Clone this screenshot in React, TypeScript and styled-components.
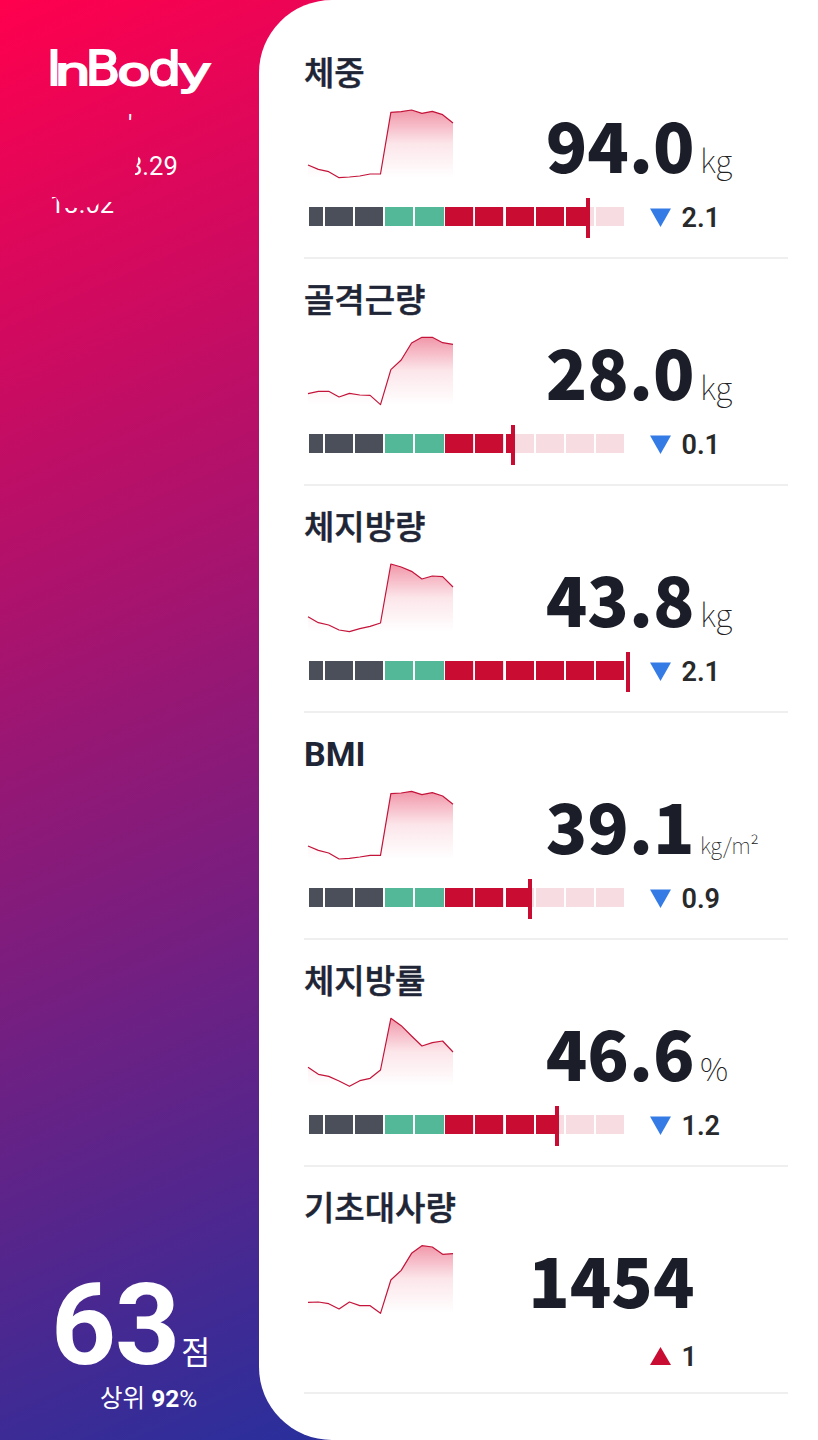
import React from "react";
import styled, { createGlobalStyle } from "styled-components";

const GlobalStyle = createGlobalStyle`
  * { box-sizing: border-box; }
  body { margin: 0; }
`;

const KR = `"Noto Sans CJK KR", sans-serif`;
const LATIN = `Roboto, "Noto Sans CJK KR", sans-serif`;

const Screen = styled.main`
  display: flex;
  width: 818px;
  height: 1440px;
  overflow: hidden;
  background: linear-gradient(156deg, #ff004e 0%, #2a2f9c 99%) 0 0 / 340px 100% no-repeat;
`;

const Sidebar = styled.aside`
  display: flex;
  flex-direction: column;
  justify-content: space-between;
  width: 259px;
  padding: 40px 0 24px 50px;
  color: #fff;
`;

const Logo = styled.svg`
  display: block;
  width: 164px;
  height: 60px;
  overflow: visible;
  font-family: "DejaVu Sans", sans-serif;
`;

const Stamp = styled.div`
  display: flex;
  flex-direction: column;
  font: 400 25.5px/38px ${LATIN};
`;

const StampLine = styled.span<{ $indent?: number; $drop?: number; $clip: string; $height?: number }>`
  height: ${(p) => p.$height ?? 38}px;
  padding: ${(p) => p.$drop ?? 0}px 0 0 ${(p) => p.$indent ?? 0}px;
  clip-path: ${(p) => p.$clip};
`;

const Score = styled.div`
  display: flex;
  align-items: baseline;
  padding-left: 1px;
  font: 700 113.5px/110px ${LATIN};
  letter-spacing: -1px;
`;

const ScoreUnit = styled.span`
  margin-left: 2px;
  font: 400 31.5px/40px ${KR};
`;

const Rank = styled.div`
  padding-left: 50px;
  font: 400 24.5px/35px ${LATIN};
  white-space: nowrap;
`;

const Panel = styled.div`
  flex: 1;
  padding: 32px 0 0 45px;
  background: #fff;
  border-radius: 73px 0 0 73px;
`;

const Metric = styled.section`
  display: flex;
  flex-direction: column;
  width: 484px;
  height: 227px;
  border-bottom: 2px solid #efeff0;
`;

const Title = styled.h2`
  height: 77px;
  margin: 0;
  padding-top: 19px;
  font: 500 33px/40px ${KR};
  color: #202536;
  -webkit-text-stroke: 0.5px #202536;

  &:lang(en) {
    padding-top: 21px;
    font: 700 34px/41px ${LATIN};
    -webkit-text-stroke: 0;
  }
`;

const Reading = styled.div`
  display: flex;
  height: 89px;
  padding-left: 4px;
`;

const Spark = styled.svg`
  flex: none;
  width: 145px;
  height: 69px;
  overflow: visible;
`;

const Amount = styled.div`
  display: flex;
  align-items: baseline;
  height: 78px;
`;

const Value = styled.div`
  width: 241.5px;
  text-align: right;
  font: 900 68.3px/69px ${KR};
  color: #1b1e28;
`;

const Unit = styled.div<{ $small?: boolean }>`
  padding-left: 5.5px;
  font: 100 ${(p) => (p.$small ? 22 : 32)}px/40px ${KR};
  letter-spacing: ${(p) => (p.$small ? -0.5 : -0.3)}px;
  color: #222;
`;

const Foot = styled.div<{ $tall?: boolean }>`
  display: flex;
  align-items: center;
  height: ${(p) => (p.$tall ? 48 : 40)}px;
  padding-left: 5px;
`;

const Gauge = styled.div`
  position: relative;
  display: flex;
  align-items: center;
  gap: 1.8px;
  width: 341px;
  height: 40px;
`;

const Segment = styled.div<{ $tone: string; $first?: boolean }>`
  width: ${(p) => (p.$first ? 14.2 : 28.3)}px;
  height: 19px;
  margin-top: -3px;
  background: ${(p) => p.$tone};
`;

const Marker = styled.i`
  position: absolute;
  top: 0;
  width: 4px;
  height: 40px;
  background: #c90c32;
`;

const Delta = styled.div`
  display: flex;
  align-items: center;
  gap: 10.5px;
  font: 600 27px/40px ${LATIN};
  color: #28292b;
`;

const Arrow = styled.svg`
  width: 21px;
  height: 19px;
  margin-top: -2px;
`;

type MetricData = {
  title: string;
  lang?: string;
  value: string;
  unit?: string;
  small?: boolean;
  delta: string;
  up?: boolean;
  marker?: number;
  points: number[];
};

const metrics: MetricData[] = [
  { title: "체중", value: "94.0", unit: "kg", delta: "2.1", marker: 277, points: [168, 181, 188, 206, 204, 201, 195, 195, 10, 8, 3, 13, 7, 17, 42] },
  { title: "골격근량", value: "28.0", unit: "kg", delta: "0.1", marker: 202.3, points: [173, 166, 166, 183, 172, 177, 178, 206, 101, 72, 21, 4, 4, 20, 25] },
  { title: "체지방량", value: "43.8", unit: "kg", delta: "2.1", marker: 317.2, points: [161, 179, 186, 201, 206, 197, 190, 180, 3, 12, 25, 48, 39, 41, 72] },
  { title: "BMI", lang: "en", value: "39.1", unit: "kg/m²", small: true, delta: "0.9", marker: 219, points: [168, 181, 189, 207, 205, 201, 196, 196, 11, 9, 4, 14, 8, 18, 43] },
  { title: "체지방률", value: "46.6", unit: "%", delta: "1.2", marker: 246, points: [151, 172, 178, 192, 208, 191, 184, 159, 4, 26, 57, 87, 77, 72, 105] },
  { title: "기초대사량", value: "1454", delta: "1", up: true, points: [175, 174, 179, 195, 174, 185, 185, 208, 108, 79, 28, 5, 9, 31, 29] },
];

const STEP = 435 / 14;

function Sparkline({ points, id }: { points: number[]; id: string }) {
  const line = points.map((y, i) => `${(i * STEP).toFixed(1)},${y}`).join(" L");
  return (
    <Spark viewBox="0 0 435 207">
      <defs>
        <linearGradient id={id} gradientUnits="userSpaceOnUse" x1="0" y1="0" x2="0" y2="207">
          <stop offset="0" stopColor="#e0173f" stopOpacity="0.46" />
          <stop offset="0.5" stopColor="#e0173f" stopOpacity="0.11" />
          <stop offset="1" stopColor="#e0173f" stopOpacity="0" />
        </linearGradient>
      </defs>
      <path d={`M${line} L435,207 L0,207 Z`} fill={`url(#${id})`} />
      <path d={`M${line}`} fill="none" stroke="#c4143a" strokeWidth="3.6" strokeLinejoin="round" />
    </Spark>
  );
}

function segmentTone(index: number, marker: number) {
  if (index < 3) return "#4b4f5a";
  if (index < 5) return "#52b898";
  const start = 16 + (index - 1) * 30.1;
  const filled = Math.max(0, Math.min(28.3, marker - start));
  return `linear-gradient(90deg, #c90c32 ${filled}px, #f7dce1 ${filled}px)`;
}

function MetricRow({ data, id }: { data: MetricData; id: string }) {
  const { marker } = data;
  return (
    <Metric>
      <Title lang={data.lang ?? "ko"}>{data.title}</Title>
      <Reading>
        <Sparkline points={data.points} id={id} />
        <Amount>
          <Value>{data.value}</Value>
          {data.unit && <Unit $small={data.small}>{data.unit}</Unit>}
        </Amount>
      </Reading>
      <Foot $tall={marker === undefined}>
        <Gauge>
          {marker !== undefined && (
            <>
              {Array.from({ length: 11 }, (_, i) => (
                <Segment key={i} $first={i === 0} $tone={segmentTone(i, marker)} />
              ))}
              <Marker style={{ left: marker }} />
            </>
          )}
        </Gauge>
        <Delta>
          <Arrow viewBox="0 0 21 19">
            {data.up ? <path d="M10.5 0 21 18H0Z" fill="#c90c32" /> : <path d="M0 .5H21L10.5 19Z" fill="#347be5" />}
          </Arrow>
          {data.delta}
        </Delta>
      </Foot>
    </Metric>
  );
}

const wordmark = [
  { char: "I", x: -3.2, size: 48.8, width: 14.4 },
  { char: "n", x: 4.4, size: 39.5, width: 36.3 },
  { char: "B", x: 35.2, size: 48.8, width: 35.2 },
  { char: "o", x: 67.2, size: 39.5, width: 33.4 },
  { char: "d", x: 98.3, size: 46.8, width: 33 },
  { char: "y", x: 127.9, size: 39.5, width: 33.4 },
];

export default function App() {
  return (
    <>
      <GlobalStyle />
      <Screen>
        <Sidebar>
          <div>
            <Logo viewBox="0 0 164 60" aria-label="InBody">
              <text y="45.3" fill="#fff" stroke="#fff" strokeWidth="1.9">
                {wordmark.map((g) => (
                  <tspan key={g.char} x={g.x} fontSize={g.size} textLength={g.width} lengthAdjust="spacingAndGlyphs">
                    {g.char}
                  </tspan>
                ))}
              </text>
            </Logo>
            <Stamp>
              <StampLine $indent={78} $drop={5} $height={47} $clip="polygon(0 13px, 100% 13px, 100% 22px, 0 22px)">'</StampLine>
              <StampLine $indent={78} $clip="polygon(90px 0, 100% 0, 100% 100%, 83px 100%)">8.29</StampLine>
              <StampLine $clip="polygon(0 12px, 6px 12px, 9px 17px, 15px 21px, 26px 23px, 45px 22px, 50px 17px, 100% 17px, 100% 100%, 0 100%)">13.02</StampLine>
            </Stamp>
          </div>
          <div>
            <Score>
              63<ScoreUnit>점</ScoreUnit>
            </Score>
            <Rank>
              상위 <b>92</b>%
            </Rank>
          </div>
        </Sidebar>
        <Panel>
          {metrics.map((m, i) => (
            <MetricRow key={m.title} data={m} id={`trend-${i}`} />
          ))}
        </Panel>
      </Screen>
    </>
  );
}
